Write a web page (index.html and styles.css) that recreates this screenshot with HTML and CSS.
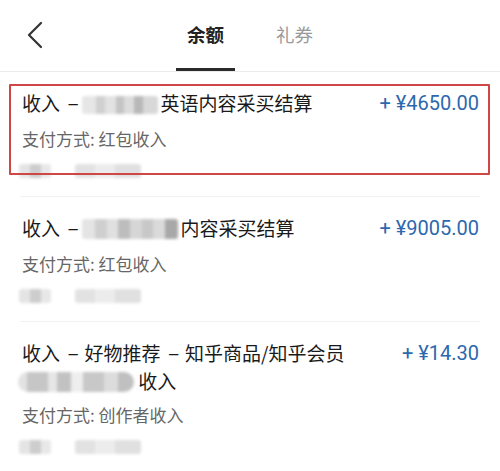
FILE: index.html
```html
<!DOCTYPE html>
<html>
<head>
	<title>余额</title>
	<meta charset="utf-8">
<link rel="stylesheet" href="styles.css">
</head>
<body>
<div class="topbar">
	<div class="voltar">
		<svg width="18" height="28" viewBox="0 0 18 28"><path d="M15 2 L3 14 L15 26" fill="none" stroke="#333" stroke-width="2.2" stroke-linecap="round" stroke-linejoin="round"/></svg>
	</div>
	<div class="abas">
		<div class="aba ativa"><span>余额</span><i></i></div>
		<div class="aba"><span>礼券</span><i></i></div>
	</div>
	<div></div>
</div>

<div class="lista">
	<div class="item marcado">
		<div class="linha">
			<div class="titulo">收入<span class="traco">–</span><span class="borrao b1"></span>英语内容采买结算</div>
			<div class="valor">+ ¥4650.00</div>
		</div>
		<div class="sub">支付方式: 红包收入</div>
		<div class="data"><span class="borrao d1"></span><span class="borrao d2"></span></div>
		<div class="caixa"></div>
	</div>
	<div class="item">
		<div class="linha">
			<div class="titulo">收入<span class="traco">–</span><span class="borrao b2"></span>内容采买结算</div>
			<div class="valor">+ ¥9005.00</div>
		</div>
		<div class="sub">支付方式: 红包收入</div>
		<div class="data"><span class="borrao d1"></span><span class="borrao d2"></span></div>
	</div>
	<div class="item">
		<div class="linha">
			<div class="titulo">收入<span class="traco">–</span>好物推荐<span class="traco">–</span>知乎商品/知乎会员<br><span class="borrao b3"></span> 收入</div>
			<div class="valor">+ ¥14.30</div>
		</div>
		<div class="sub">支付方式: 创作者收入</div>
		<div class="data"><span class="borrao d1"></span><span class="borrao d2"></span></div>
	</div>
</div>
</body>
</html>
```

FILE: styles.css
```css
body{
	margin: 0;
	background: #fff;
	font-family: "Noto Sans CJK SC", "Noto Sans", sans-serif;
	color: #1a1a1a;
}
.topbar{
	display: grid;
	grid-template-columns: 1fr auto 1fr;
	height: 71px;
	border-bottom: 1px solid #ebebeb;
}
.voltar{
	padding: 21px 0 0 26px;
}
.abas{
	display: flex;
	gap: 30px;
}
.aba{
	width: 59px;
	display: flex;
	flex-direction: column;
	align-items: center;
	padding-top: 20px;
	font-size: 18.5px;
	line-height: 28px;
	color: #9a9a9a;
}
.aba i{
	display: block;
	width: 59px;
	height: 3px;
	margin-top: auto;
	margin-bottom: 0;
}
.aba.ativa{
	color: #222;
	font-weight: bold;
}
.aba.ativa i{
	background: #2b2b2b;
}
.item{
	margin: 0 20px;
	padding: 18px 0 15px 2px;
	border-bottom: 1px solid #f1f1f1;
}
.marcado{
	position: relative;
}
.caixa{
	position: absolute;
	left: -11px;
	top: 12px;
	width: 477px;
	height: 87px;
	border: 2px solid #cf4646;
	border-radius: 1px;
}
.linha{
	display: flex;
	justify-content: space-between;
	align-items: flex-start;
}
.titulo{
	font-size: 19px;
	line-height: 26px;
}
.traco{
	font-family: Roboto, sans-serif;
	margin: 0 5px 0 7px;
}
.valor{
	font-family: Roboto, "Noto Sans CJK SC", sans-serif;
	font-size: 20px;
	line-height: 26px;
	color: #2c68ae;
	padding-right: 1px;
}
.sub{
	margin-top: 10px;
	font-size: 17px;
	line-height: 22px;
	color: #666;
}
.data{
	margin-top: 11px;
	height: 20px;
	display: flex;
	align-items: center;
	gap: 24px;
}
.borrao{
	display: inline-block;
	vertical-align: -3px;
	filter: blur(1.6px);
	border-radius: 3px;
}
.b1{
	width: 76px;
	height: 18px;
	margin: 0 2px 0 -2px;
	background: linear-gradient(90deg, #e6e6e6 0 18%, #d0d0d0 18% 30%, #e2e2e2 30% 45%, #c4c4c4 45% 55%, #dcdcdc 55% 68%, #b8b8b8 68% 80%, #d8d8d8 80% 100%);
}
.b2{
	width: 96px;
	height: 20px;
	margin: 0 2px 0 -2px;
	background: linear-gradient(90deg, #e4e4e4 0 14%, #cfcfcf 14% 26%, #e0e0e0 26% 38%, #bdbdbd 38% 50%, #d6d6d6 50% 62%, #c8c8c8 62% 74%, #dadada 74% 86%, #a8a8a8 86% 100%);
}
.b3{
	width: 116px;
	height: 20px;
	margin-left: -4px;
	border-radius: 10px;
	background: linear-gradient(90deg, #e2e2e2 0 8%, #c6c6c6 8% 26%, #e6e6e6 26% 34%, #c2c2c2 34% 46%, #eeeeee 46% 56%, #c8c8c8 56% 74%, #dcdcdc 74% 86%, #c0c0c0 86% 100%);
}
.d1{
	width: 32px;
	height: 14px;
	margin-left: -3px;
	background: linear-gradient(90deg, #e4e4e4 0 35%, #cdcdcd 35% 70%, #e8e8e8 70% 100%);
}
.d2{
	width: 66px;
	height: 14px;
	background: linear-gradient(90deg, #e2e2e2 0 30%, #ececec 30% 60%, #e0e0e0 60% 100%);
}
```
